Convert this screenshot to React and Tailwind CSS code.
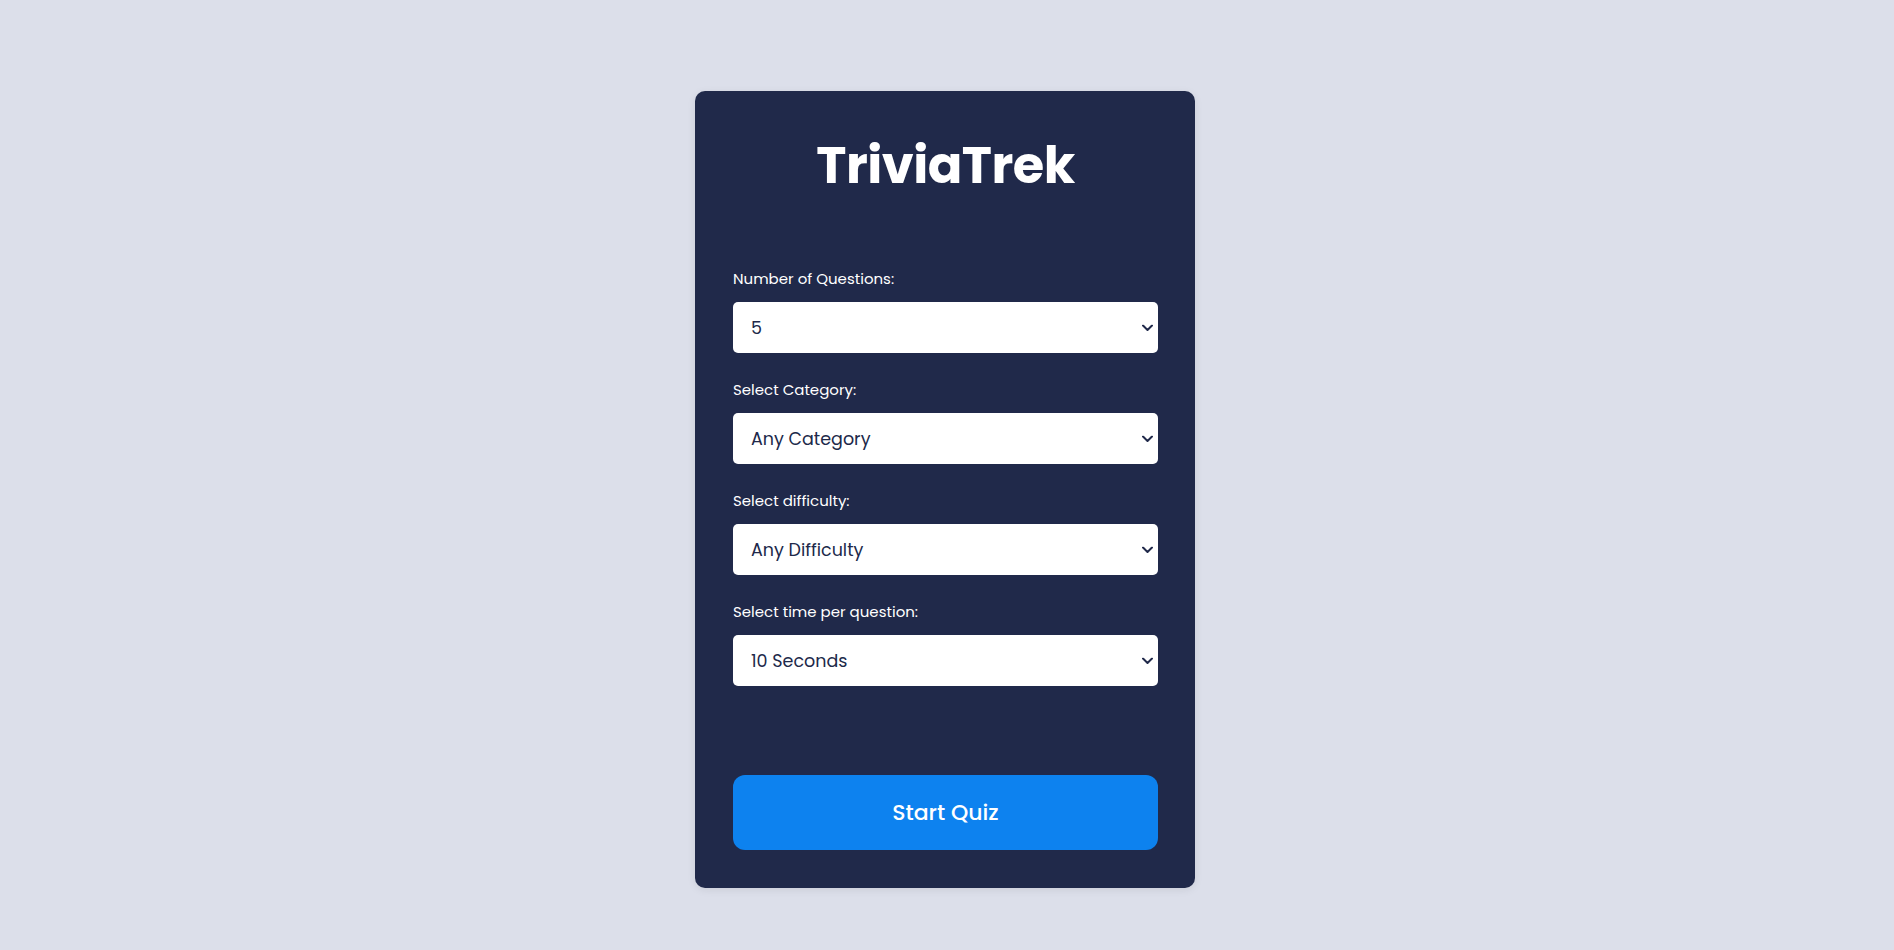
import React from "react";

const fields = [
  { label: "Number of Questions:", value: "5", options: ["5", "10", "15", "20"] },
  { label: "Select Category:", value: "Any Category", options: ["Any Category", "General Knowledge", "Science", "History"] },
  { label: "Select difficulty:", value: "Any Difficulty", options: ["Any Difficulty", "Easy", "Medium", "Hard"] },
  { label: "Select time per question:", value: "10 Seconds", options: ["10 Seconds", "15 Seconds", "20 Seconds", "30 Seconds"] },
];

export default function App() {
  return (
    <div
      className="min-h-screen w-full bg-[#dcdfea] flex justify-center pt-[91px] pr-[4px]"
      style={{ fontFamily: "Poppins, Inter, 'Noto Sans', sans-serif" }}
    >
      <div className="w-[500px] h-[797px] bg-[#20294a] rounded-[10px] pl-[38px] pr-[37px] pt-[44px] pb-[38px] flex flex-col shadow-[0_2px_8px_rgba(0,0,0,0.08)]">
        <h1 className="text-center text-white font-bold text-[51px] leading-[60px] tracking-[-0.5px]">TriviaTrek</h1>
        <div className="mt-[74px] flex flex-col gap-[27px]">
          {fields.map((f) => (
            <div key={f.label} className="flex flex-col">
              <label className="text-white text-[15px] leading-[20px] mb-[13px]">{f.label}</label>
              <div className="relative">
                <select
                  defaultValue={f.value}
                  className="appearance-none block h-[51px] w-full bg-white rounded-[5px] pl-[18px] pr-[24px] pt-[1px] text-[17.5px] text-[#20294a] outline-none border-0"
                  style={{ fontFamily: "Poppins, Inter, 'Noto Sans', sans-serif" }}
                >
                  {f.options.map((o) => (
                    <option key={o} value={o}>{o}</option>
                  ))}
                </select>
                <svg
                  className="pointer-events-none absolute right-[5px] top-1/2 -translate-y-1/2"
                  width="11"
                  height="7"
                  viewBox="0 0 11 7"
                  fill="none"
                >
                  <path d="M1 1l4.5 4.5L10 1" stroke="#20294a" strokeWidth="2" strokeLinecap="round" strokeLinejoin="round" />
                </svg>
              </div>
            </div>
          ))}
        </div>
        <button className="mt-auto h-[75px] w-full rounded-[12px] bg-[#0d82ef] text-white text-[22px] font-medium">
          Start Quiz
        </button>
      </div>
    </div>
  );
}
